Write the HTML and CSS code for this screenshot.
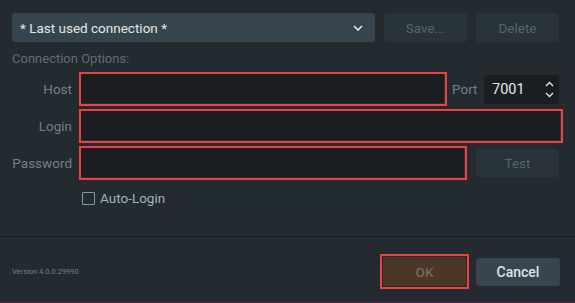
FILE: index.html
```html
<!DOCTYPE html>
<html>
<head>
<meta charset="utf-8">
<link rel="stylesheet" href="styles.css">
</head>
<body>
<div class="dialog">
  <div class="main">
    <div class="top-row">
      <div class="combo">
        <span class="combo-text">* Last used connection *</span>
        <svg class="chev" width="10" height="6" viewBox="0 0 10 6"><path d="M1 1 L5 5 L9 1" fill="none" stroke="#e6eaec" stroke-width="1.6"/></svg>
      </div>
      <div class="btn btn-disabled">Save...</div>
      <div class="btn btn-disabled">Delete</div>
    </div>
    <div class="section-label">Connection Options:</div>
    <div class="form">
      <div class="row">
        <div class="label">Host</div>
        <div class="field-wrap w-host"><div class="field"></div></div>
        <div class="port-label">Port</div>
        <div class="spin">
          <span class="spin-val">7001</span>
          <span class="spin-arrows">
            <svg width="9" height="6" viewBox="0 0 9 6"><path d="M1 5 L4.5 1.5 L8 5" fill="none" stroke="#e6eaec" stroke-width="1.3"/></svg>
            <svg width="9" height="6" viewBox="0 0 9 6"><path d="M1 1 L4.5 4.5 L8 1" fill="none" stroke="#e6eaec" stroke-width="1.3"/></svg>
          </span>
        </div>
      </div>
      <div class="row">
        <div class="label">Login</div>
        <div class="field-wrap w-login"><div class="field"></div></div>
      </div>
      <div class="row">
        <div class="label">Password</div>
        <div class="field-wrap w-pass"><div class="field"></div></div>
        <div class="btn btn-disabled btn-test">Test</div>
      </div>
      <div class="check-row">
        <span class="checkbox"></span>
        <span class="check-text">Auto-Login</span>
      </div>
    </div>
  </div>
  <div class="divider"></div>
  <div class="footer">
    <div class="version">Version 4.0.0.29990</div>
    <div class="footer-btns">
      <div class="ok-wrap"><div class="btn btn-ok">OK</div></div>
      <div class="btn btn-cancel">Cancel</div>
    </div>
  </div>
  <div class="bottom-line"></div>
</div>
</body>
</html>
```
FILE: styles.css
```css
html, body {
  margin: 0;
  padding: 0;
  background: #232a30;
  font-family: Roboto, "Liberation Sans", sans-serif;
}
.dialog {
  width: 575px;
  height: 303px;
  display: flex;
  flex-direction: column;
  overflow: hidden;
}
.main {
  height: 236px;
  box-sizing: border-box;
  padding: 13px 0 0 12px;
}
.top-row {
  display: flex;
  gap: 9px;
  height: 29px;
}
.combo {
  width: 363px;
  background: #36454d;
  border-radius: 3px;
  display: flex;
  align-items: center;
  justify-content: space-between;
  padding: 0 12px 0 8px;
  box-sizing: border-box;
}
.combo-text {
  color: #e3e7e9;
  font-size: 13.5px;
}
.chev { margin-top: 1px; }
.btn {
  width: 83px;
  display: flex;
  align-items: center;
  justify-content: center;
  border-radius: 3px;
  font-size: 13.5px;
  box-sizing: border-box;
}
.btn-disabled {
  background: #29343a;
  color: #55646d;
}
.section-label {
  margin-top: 9px;
  margin-bottom: 5px;
  line-height: 16px;
  color: #5b6e79;
  font-size: 13px;
}
.form {
  display: flex;
  flex-direction: column;
  gap: 4px;
}
.row {
  display: flex;
  align-items: center;
  height: 34px;
}
.row + .row { margin-top: -1px; }
.label {
  width: 60px;
  text-align: right;
  color: #6f818b;
  font-size: 13.5px;
  margin-right: 7px;
}
.field-wrap {
  height: 34px;
  box-sizing: border-box;
  border: 2px solid #f0403f;
  padding: 0;
}
.field {
  height: 100%;
  background: #1a1e21;
  border-right: 1px solid #2a3035;
  border-bottom: 1px solid #2a3035;
  box-sizing: border-box;
}
.w-host { width: 368px; }
.w-login { width: 484px; }
.w-pass { width: 388px; }
.port-label {
  color: #6f818b;
  font-size: 13.5px;
  margin-left: 5px;
  width: 32px;
}
.spin {
  width: 75px;
  height: 29px;
  background: #1a1e21;
  border-radius: 3px;
  display: flex;
  align-items: center;
  justify-content: space-between;
  padding: 0 5px 0 8px;
  box-sizing: border-box;
}
.spin-val {
  color: #e6e8ea;
  font-size: 14.5px;
}
.spin-arrows {
  display: flex;
  flex-direction: column;
  gap: 5px;
}
.spin-arrows svg { display: block; }
.btn-test {
  height: 28px;
  margin-left: 9px;
}
.check-row {
  display: flex;
  align-items: center;
  margin-left: 70px;
  margin-top: 5px;
  height: 18px;
}
.checkbox {
  width: 11px;
  height: 11px;
  border: 1px solid #8c969b;
  border-radius: 1px;
  margin-right: 5px;
}
.check-text {
  color: #a6b0b5;
  font-size: 13.5px;
}
.divider {
  height: 1px;
  background: #181d21;
}
.footer {
  height: 65px;
  display: flex;
  align-items: center;
  justify-content: space-between;
  padding: 0 15px 0 12px;
}
.version {
  color: #6f808a;
  font-size: 7.5px;
  margin-top: 3px;
}
.footer-btns {
  display: flex;
  align-items: center;
  gap: 7px;
  margin-top: 4px;
}
.ok-wrap {
  border: 2px solid #f0403f;
  width: 89px;
  height: 35px;
  box-sizing: border-box;
  padding: 1px;
  display: flex;
}
.btn-ok {
  flex: 1;
  width: auto;
  background: #4a3728;
  color: #786757;
  font-weight: 500;
  border-radius: 2px;
}
.btn-cancel {
  width: 84px;
  height: 28px;
  background: #37464e;
  color: #dde2e5;
  font-weight: 500;
  font-size: 14px;
}
.bottom-line {
  height: 1px;
  background: #4a2f4a;
}
```
